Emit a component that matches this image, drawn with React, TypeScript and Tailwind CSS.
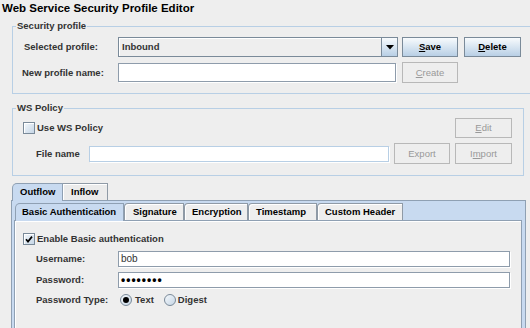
import type { ReactNode } from 'react';

function Btn({ children, className, disabled }: { children: ReactNode; className: string; disabled?: boolean }) {
  return (
    <div
      className={
        disabled
          ? `flex items-center justify-center border border-[#b8b8b8] bg-[#eeeeee] text-[#999999] ${className}`
          : `flex items-center justify-center border border-[#7a8a99] bg-gradient-to-b from-[#f8fbfd] to-[#b8cfe5] text-black ${className}`
      }
    >
      {children}
    </div>
  );
}

function CheckBox({ checked }: { checked?: boolean }) {
  return (
    <div className="w-[12px] h-[12px] border border-[#7a8a99] bg-gradient-to-br from-[#f4f8fb] to-[#c6d6e6] shadow-[inset_1px_1px_0_#ffffff] flex items-center justify-center">
      {checked && (
        <svg width="10" height="10" viewBox="0 0 10 10">
          <path d="M2 5.2 L4 7.6 L8 2.6" stroke="#000" strokeWidth="1.7" fill="none" />
        </svg>
      )}
    </div>
  );
}

function Radio({ checked }: { checked?: boolean }) {
  return (
    <div className="w-[12px] h-[12px] rounded-full border border-[#7a8a99] bg-gradient-to-br from-[#f4f8fb] to-[#c6d6e6] flex items-center justify-center">
      {checked && <div className="w-[6px] h-[6px] rounded-full bg-black" />}
    </div>
  );
}

function Field({ className, children }: { className: string; children?: ReactNode }) {
  return (
    <div className={`flex items-center bg-white border border-[#8e9cab] shadow-[1px_1px_0_#ffffff] pl-[2px] ${className}`}>
      {children}
    </div>
  );
}

export default function App() {
  return (
    <div className="w-[530px] h-[328px] overflow-hidden bg-[#eeeeee] font-['Liberation_Sans',Arial,sans-serif] text-[9.5px] font-bold text-[#333333] leading-none">
      <div className="h-[17px] pl-[2px] flex items-center text-[11.5px] text-black">Web Service Security Profile Editor</div>

      {/* Security profile */}
      <fieldset className="ml-[12px] mt-[3px] w-[530px] border border-[#b8cfe5] pt-[5px] pb-[10px]">
        <legend className="ml-[3px] px-[1px] h-[12px] leading-[12px]">Security profile</legend>
        <div className="flex items-center h-[20px]">
          <div className="w-[105px] pl-[11px]">Selected profile:</div>
          <div className="w-[280px] h-[20px] flex border border-[#7a8a99] bg-[#eeeeee]">
            <div className="flex-1 flex items-center pl-[3px] shadow-[inset_1px_1px_0_#ffffff]">Inbound</div>
            <div className="w-[16px] border-l border-[#7a8a99] bg-gradient-to-b from-[#f8fbfd] to-[#b8cfe5] flex items-center justify-center">
              <svg width="8" height="5" viewBox="0 0 8 5">
                <path d="M0 0 H8 L4 4.5 Z" fill="#000" />
              </svg>
            </div>
          </div>
          <Btn className="ml-[4px] w-[56px] h-[20px]">
            <span className="underline">S</span>ave
          </Btn>
          <Btn className="ml-[6px] w-[57px] h-[20px]">
            <span className="underline">D</span>elete
          </Btn>
        </div>
        <div className="flex items-center h-[21px] mt-[5px]">
          <div className="w-[105px] pl-[9px]">New profile name:</div>
          <Field className="w-[278px] h-[19px]" />
          <Btn disabled className="ml-[6px] w-[56px] h-[21px] font-normal">
            <span className="underline">C</span>reate
          </Btn>
        </div>
      </fieldset>

      {/* WS Policy */}
      <fieldset className="ml-[12px] mt-[8px] w-[512px] border border-[#b8cfe5] pt-[4px] pb-[11px] pr-[11px]">
        <legend className="ml-[3px] px-[1px] h-[12px] leading-[12px]">WS Policy</legend>
        <div className="flex items-center justify-between h-[20px]">
          <div className="flex items-center gap-[2px] pl-[10px]">
            <CheckBox />
            <span>Use WS Policy</span>
          </div>
          <Btn disabled className="w-[57px] h-[20px] font-normal">
            <span className="underline">E</span>dit
          </Btn>
        </div>
        <div className="flex items-center h-[21px] mt-[5px]">
          <div className="w-[76px] pl-[23px]">File name</div>
          <Field className="w-[300px] h-[16px] border-[#b8cfe5]" />
          <Btn disabled className="ml-[5px] w-[56px] h-[21px] font-normal">Export</Btn>
          <Btn disabled className="ml-[5px] w-[57px] h-[21px] font-normal">
            I<span className="underline">m</span>port
          </Btn>
        </div>
      </fieldset>

      {/* Outer tabs */}
      <div className="mt-[7px] flex items-end h-[17px] pl-[12px]">
        <div className="relative z-10 -mb-px w-[51px] h-[18px] pb-px flex items-center pl-[7px] bg-[#c8daf0] border-t border-l border-r border-[#8fa0b3] rounded-tl-[5px] text-black">
          Outflow
        </div>
        <div className="w-[45px] h-[17px] flex items-center pl-[8px] bg-[#ebebeb] border-t border-r border-[#8f9aa6] shadow-[inset_1px_1px_0_#ffffff] text-black">
          Inflow
        </div>
      </div>

      {/* Outer pane */}
      <div className="ml-[11px] w-[515px] h-[200px] border-t border-l border-r border-[#8fa0b3] bg-[#c8daf0] pl-[2px] pt-[2px] pr-[3px]">
        <div className="flex items-end h-[17px] pl-[1px]">
          <div className="relative z-10 -mb-px w-[109px] h-[18px] pb-px flex items-center pl-[6px] bg-[#c8daf0] border-t border-l border-r border-[#8fa0b3] rounded-tl-[5px] text-black">
            Basic Authentication
          </div>
          <div className="w-[60px] h-[17px] flex items-center pl-[8px] bg-[#eeeeee] border-t border-r border-l border-[#8f9aa6] rounded-tl-[4px] shadow-[inset_1px_1px_0_#ffffff] text-black">
            Signature
          </div>
          <div className="w-[64px] h-[17px] flex items-center pl-[7px] bg-[#eeeeee] border-t border-r border-l border-[#8f9aa6] rounded-tl-[4px] shadow-[inset_1px_1px_0_#ffffff] text-black">
            Encryption
          </div>
          <div className="w-[69px] h-[17px] flex items-center pl-[7px] bg-[#eeeeee] border-t border-r border-l border-[#8f9aa6] rounded-tl-[4px] shadow-[inset_1px_1px_0_#ffffff] text-black">
            Timestamp
          </div>
          <div className="w-[86px] h-[17px] flex items-center pl-[7px] bg-[#eeeeee] border-t border-r border-l border-[#8f9aa6] rounded-tl-[4px] shadow-[inset_1px_1px_0_#ffffff] text-black">
            Custom Header
          </div>
        </div>

        {/* Inner pane */}
        <div className="w-[508px] h-[200px] border-t border-l border-r border-[#8fa0b3] bg-[#eeeeee] shadow-[inset_1px_1px_0_#ffffff] pt-[12px] pl-[8px]">
          <div className="flex items-center gap-[2px] h-[12px]">
            <CheckBox checked />
            <span>Enable Basic authentication</span>
          </div>
          <div className="flex items-center h-[16px] mt-[6px]">
            <div className="w-[95px] pl-[13px]">Username:</div>
            <Field className="w-[392px] h-[16px] font-normal text-[10px] text-[#333333]">bob</Field>
          </div>
          <div className="flex items-center h-[16px] mt-[5px]">
            <div className="w-[95px] pl-[13px]">Password:</div>
            <Field className="w-[392px] h-[16px] text-black text-[12px] tracking-[1px]">••••••••</Field>
          </div>
          <div className="flex items-center h-[12px] mt-[6px]">
            <div className="w-[97px] pl-[13px]">Password Type:</div>
            <Radio checked />
            <span className="ml-[3px]">Text</span>
            <div className="ml-[10px]">
              <Radio />
            </div>
            <span className="ml-[2px]">Digest</span>
          </div>
        </div>
      </div>
    </div>
  );
}
